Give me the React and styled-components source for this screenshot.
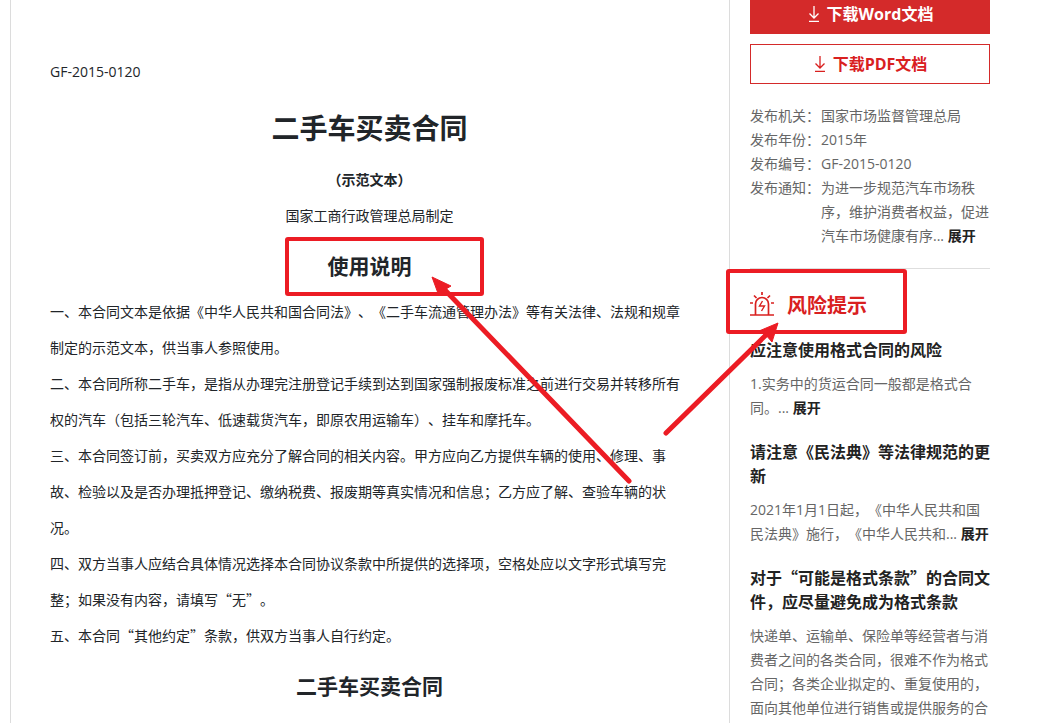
import React from "react";
import styled, { createGlobalStyle } from "styled-components";

const GlobalStyle = createGlobalStyle`
  * {
    box-sizing: border-box;
  }
  body {
    margin: 0;
    background: #fff;
    color: #212529;
    font-family: "Noto Sans CJK SC", sans-serif;
    font-size: 14px;
    text-spacing-trim: space-all;
  }
  h1, h2, h3, p, dl, dt, dd {
    margin: 0;
  }
`;

// latin digits come from Open Sans, chinese falls through to the CJK face
const mixedFont = `"Open Sans", "Noto Sans CJK SC", sans-serif`;

const Page = styled.div`
  position: relative;
  display: flex;
  min-height: 100vh;
  padding: 0 58px 0 10px;
  overflow: hidden;
`;

const Document = styled.main`
  flex: 1;
  min-width: 0;
  padding: 54px 40px 0 39px;
  border-left: 1px solid #dcdcdc;
`;

const Paragraph = styled.p`
  line-height: 36px;
  text-align: ${(props) => (props.$center ? "center" : "left")};
  font-weight: ${(props) => (props.$bold ? 700 : 400)};
`;

const DocNumber = styled(Paragraph)`
  font-family: ${mixedFont};
`;

const DocTitle = styled.h1`
  font-size: 28px;
  line-height: 40px;
  padding: 17px 0 14px;
  text-align: center;
`;

const DocSubtitle = styled.h2`
  font-size: 21px;
  line-height: 32px;
  padding: 16px 0 12px;
  text-align: center;
`;

const Sidebar = styled.aside`
  flex: 0 0 261px;
  padding-left: 20px;
  border-left: 1px solid #dcdcdc;
  margin-top: -6px;
`;

const DownloadButton = styled.button`
  display: flex;
  align-items: center;
  justify-content: center;
  gap: 6px;
  width: 100%;
  height: 40px;
  margin-bottom: ${(props) => (props.$primary ? "10px" : "20px")};
  padding: 0;
  border: 1px solid #d42a2a;
  background: ${(props) => (props.$primary ? "#d42a2a" : "#fff")};
  color: ${(props) => (props.$primary ? "#fff" : "#d9201f")};
  font-family: ${mixedFont};
  font-size: 16px;
  font-weight: 700;
  line-height: 24px;
  cursor: pointer;
`;

const InfoList = styled.dl`
  display: grid;
  grid-template-columns: 71px 1fr;
  padding-bottom: 20px;
  border-bottom: 1px solid #dedede;
  color: #666;
  font-family: ${mixedFont};
  line-height: 24px;
`;

const More = styled.a`
  color: #222;
  font-weight: 700;
  text-decoration: none;
`;

const RiskTitle = styled.h2`
  display: flex;
  align-items: center;
  gap: 12px;
  margin: 20px 0 16px;
  color: #d9201f;
  font-size: 20px;
  line-height: 32px;
`;

const RiskItem = styled.section`
  margin-bottom: 19px;
  line-height: 24px;

  &:last-child {
    margin-bottom: 0;
  }
  h3 {
    margin-bottom: 11px;
    color: #222;
    font-size: 16px;
    font-weight: 700;
  }
  p {
    color: #666;
    font-family: ${mixedFont};
  }
`;

const Marks = styled.svg`
  position: absolute;
  top: 0;
  left: 0;
  pointer-events: none;
`;

const DownloadIcon = () => (
  <svg width="14" height="18" viewBox="0 0 14 18" fill="none" stroke="currentColor" strokeWidth="1.3">
    <path d="M7 1v12M2.5 8.5L7 13l4.5-4.5M2 16.4h10" />
  </svg>
);

const AlarmIcon = () => (
  <svg width="25" height="26" viewBox="0 0 25 26" fill="none" stroke="currentColor" strokeWidth="1.7">
    <path d="M0 23h24M5.500 23V12a6.500 6.500 0 0 1 13 0V23M12 0v3M4 3.500l2.500 2.500M20 3.500l-2.500 2.500M0 11h3M21 11h3" />
    <path d="M12.500 9l-3 5h5l-3 5" strokeWidth="1.4" />
  </svg>
);

const clauses = [
  "一、本合同文本是依据《中华人民共和国合同法》、《二手车流通管理办法》等有关法律、法规和规章制定的示范文本，供当事人参照使用。",
  "二、本合同所称二手车，是指从办理完注册登记手续到达到国家强制报废标准之前进行交易并转移所有权的汽车（包括三轮汽车、低速载货汽车，即原农用运输车）、挂车和摩托车。",
  "三、本合同签订前，买卖双方应充分了解合同的相关内容。甲方应向乙方提供车辆的使用、修理、事故、检验以及是否办理抵押登记、缴纳税费、报废期等真实情况和信息；乙方应了解、查验车辆的状况。",
  "四、双方当事人应结合具体情况选择本合同协议条款中所提供的选择项，空格处应以文字形式填写完整；如果没有内容，请填写“无”。",
  "五、本合同“其他约定”条款，供双方当事人自行约定。",
];

const risks = [
  {
    title: "应注意使用格式合同的风险",
    text: "1.实务中的货运合同一般都是格式合同。... ",
    more: true,
  },
  {
    title: "请注意《民法典》等法律规范的更新",
    text: "2021年1月1日起，《中华人民共和国民法典》施行，《中华人民共和... ",
    more: true,
  },
  {
    title: "对于“可能是格式条款”的合同文件，应尽量避免成为格式条款",
    text: "快递单、运输单、保险单等经营者与消费者之间的各类合同，很难不作为格式合同；各类企业拟定的、重复使用的，面向其他单位进行销售或提供服务的合",
    more: false,
  },
];

const App = () => {
  return (
    <Page lang="zh-CN">
      <GlobalStyle />
      <Document>
        <DocNumber>GF-2015-0120</DocNumber>
        <DocTitle>二手车买卖合同</DocTitle>
        <Paragraph $center $bold>（示范文本）</Paragraph>
        <Paragraph $center>国家工商行政管理总局制定</Paragraph>
        <DocSubtitle>使用说明</DocSubtitle>
        {clauses.map((clause) => (
          <Paragraph key={clause}>{clause}</Paragraph>
        ))}
        <DocSubtitle>二手车买卖合同</DocSubtitle>
      </Document>
      <Sidebar>
        <DownloadButton $primary type="button"><DownloadIcon />下载Word文档</DownloadButton>
        <DownloadButton type="button"><DownloadIcon />下载PDF文档</DownloadButton>
        <InfoList>
          <dt>发布机关：</dt>
          <dd>国家市场监督管理总局</dd>
          <dt>发布年份：</dt>
          <dd>2015年</dd>
          <dt>发布编号：</dt>
          <dd>GF-2015-0120</dd>
          <dt>发布通知：</dt>
          <dd>为进一步规范汽车市场秩序，维护消费者权益，促进汽车市场健康有序... <More href="#notice">展开</More></dd>
        </InfoList>
        <RiskTitle><AlarmIcon />风险提示</RiskTitle>
        {risks.map((risk) => (
          <RiskItem key={risk.title}>
            <h3>{risk.title}</h3>
            <p>
              {risk.text}
              {risk.more && <More href="#risk">展开</More>}
            </p>
          </RiskItem>
        ))}
      </Sidebar>
      <Marks width="1048" height="723" fill="none" stroke="#ec1c24" strokeWidth="4" aria-hidden="true">
        <rect x="287" y="239" width="195" height="55" rx="1" />
        <rect x="728" y="271" width="177" height="61" rx="1" />
        <path d="M629 481L443 288M666 433L769 332" strokeWidth="5" strokeLinecap="round" />
        <path d="M432 277l19 9-5 3-7 7zM778 323l-19 8 6 3 7 8z" fill="#ec1c24" strokeWidth="1" />
      </Marks>
    </Page>
  );
};

export default App;
